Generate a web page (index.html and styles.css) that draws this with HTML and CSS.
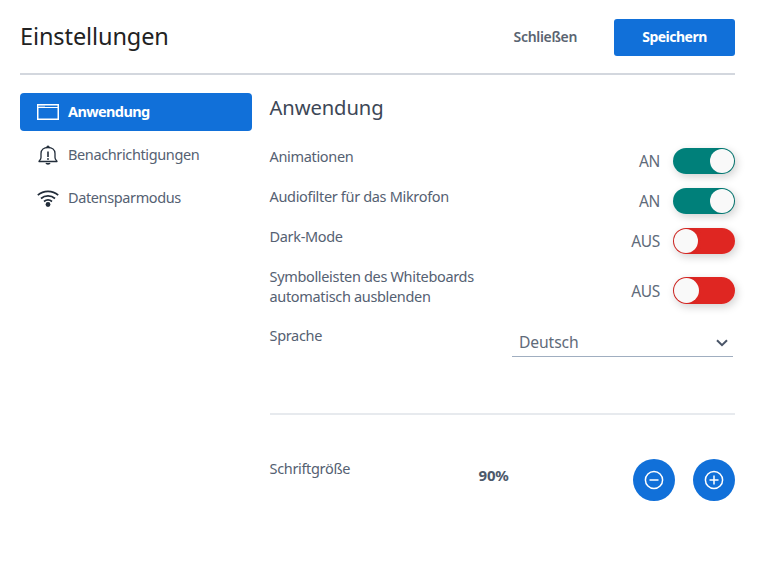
FILE: index.html
```html
<!DOCTYPE html>
<html lang="de">
<head>
<meta charset="utf-8">
<title>Einstellungen</title>
<link rel="stylesheet" href="styles.css">
</head>
<body>
<div class="modal">
  <header class="head">
    <h1 class="head-title">Einstellungen</h1>
    <div class="head-actions">
      <button class="btn-close">Schließen</button>
      <button class="btn-save">Speichern</button>
    </div>
  </header>
  <div class="main">
    <nav class="side">
      <div class="side-item active">
        <svg class="side-icon" viewBox="0 0 22 18" width="22" height="18" fill="none" stroke="currentColor"><rect x="0.75" y="1.75" width="20.5" height="14.5" stroke-width="1.5"/><path d="M1 4.5h20" stroke-width="1"/><path d="M2.5 3.2h1M4.5 3.2h1M6.5 3.2h1" stroke-width="1"/></svg>
        <span>Anwendung</span>
      </div>
      <div class="side-item">
        <svg class="side-icon" viewBox="0 0 22 22" width="22" height="22" fill="none" stroke="currentColor" stroke-width="1.3"><path d="M2 17.5c0-1 2-1.500 2-4V9.500C4 5.800 7 3.500 11 3.500s7 2.300 7 6v4c0 2.500 2 3 2 4z" stroke-linejoin="round"/><path d="M10 3.200a1 1 0 0 1 2 0" /><path d="M9 19c.5 1.300 3.500 1.300 4 0" fill="currentColor"/><path d="M11 7.500v5.500" stroke-width="1.600"/><circle cx="11" cy="15" r=".9" fill="currentColor" stroke="none"/></svg>
        <span>Benachrichtigungen</span>
      </div>
      <div class="side-item">
        <svg class="side-icon" viewBox="0 0 22 18" width="22" height="18" fill="none" stroke="currentColor" stroke-width="1.700"><path d="M.8 6.200C6.500 1 15.500 1 21.200 6.200"/><path d="M4 9.500c4-3.600 10-3.600 14 0"/><path d="M7 12.500c2.400-2 5.600-2 8 0"/><circle cx="11" cy="15.500" r="2.400" fill="currentColor" stroke="none"/></svg>
        <span>Datensparmodus</span>
      </div>
    </nav>
    <section class="content">
      <h2 class="content-title">Anwendung</h2>
      <div class="set-row row-a">
        <div class="set-label">Animationen</div>
        <div class="set-ctl"><span class="state">AN</span><span class="toggle on"><i class="knob"></i></span></div>
      </div>
      <div class="set-row row-b">
        <div class="set-label">Audiofilter für das Mikrofon</div>
        <div class="set-ctl"><span class="state">AN</span><span class="toggle on"><i class="knob"></i></span></div>
      </div>
      <div class="set-row row-b">
        <div class="set-label">Dark-Mode</div>
        <div class="set-ctl"><span class="state">AUS</span><span class="toggle off"><i class="knob"></i></span></div>
      </div>
      <div class="set-row row-c">
        <div class="set-label">Symbolleisten des Whiteboards<br>automatisch ausblenden</div>
        <div class="set-ctl"><span class="state state-low">AUS</span><span class="toggle off tall"><i class="knob"></i></span></div>
      </div>
      <div class="set-row row-lang">
        <div class="set-label">Sprache</div>
        <div class="select"><span class="select-value">Deutsch</span>
          <svg viewBox="0 0 12 8" width="12" height="8" fill="none" stroke="#4a5568" stroke-width="2"><path d="M1 1.200l5 5 5-5"/></svg>
        </div>
      </div>
      <hr class="sep">
      <div class="font-row">
        <div class="set-label">Schriftgröße</div>
        <div class="font-val">90%</div>
        <div class="font-btns">
          <button class="round"><svg viewBox="0 0 20 20" width="20" height="20" fill="none" stroke="#fff" stroke-width="1.500"><circle cx="10" cy="10" r="8.600"/><path d="M5.500 10h9"/></svg></button>
          <button class="round"><svg viewBox="0 0 20 20" width="20" height="20" fill="none" stroke="#fff" stroke-width="1.500"><circle cx="10" cy="10" r="8.600"/><path d="M5.500 10h9M10 5.500v9"/></svg></button>
        </div>
      </div>
    </section>
  </div>
</div>
</body>
</html>
```
FILE: styles.css
```css
* { box-sizing: border-box; }
html, body { margin: 0; background: #fff; }
body { font-family: "Noto Sans", "Open Sans", sans-serif; color: #4e5a6b; width: 777px; height: 563px; overflow: hidden; }
button { font-family: inherit; border: 0; cursor: pointer; }
.modal { padding: 19px 42px 0 20px; }
.head { display: flex; justify-content: space-between; align-items: center; box-sizing: content-box; height: 37px; padding-bottom: 17px; border-bottom: 2px solid #d3d7de; }
.head-title { margin: 0 0 4px; font-size: 23.5px; font-weight: 400; color: #222; letter-spacing: -0.1px; }
.head-actions { display: flex; align-items: center; gap: 37px; }
.btn-close { background: none; padding: 0 0 2px; font-size: 14px; font-weight: 600; color: #5a6471; letter-spacing: -0.33px; }
.btn-save { width: 121px; height: 37px; padding: 0 0 2px; background: #1170d9; color: #fff; border-radius: 3px; font-size: 14px; font-weight: 700; letter-spacing: -0.5px; }
.main { display: flex; gap: 18px; padding-top: 18px; }
.side { width: 232px; flex: none; display: flex; flex-direction: column; gap: 5px; }
.side-item { height: 38px; display: flex; align-items: center; gap: 9px; padding-left: 17px; border-radius: 4px; font-size: 14.5px; color: #556172; letter-spacing: -0.38px; }
.side-item span { padding-bottom: 2px; }
.side-icon { color: #222d3a; flex: none; }
.side-item.active { background: #1170d9; color: #fff; font-weight: 700; letter-spacing: -0.62px; }
.side-item.active .side-icon { color: #fff; }
.content { flex: 1; min-width: 0; }
.content-title { margin: 0 0 0 -0.5px; font-size: 20.2px; font-weight: 400; line-height: 30px; height: 30px; color: #3d4756; letter-spacing: -0.1px; position: relative; top: -1px; }
.set-row { display: flex; justify-content: space-between; }
.set-label { margin: -2px 0 0 -0.5px; font-size: 14.5px; line-height: 20px; color: #556172; letter-spacing: -0.33px; }
.set-ctl { display: flex; align-items: center; gap: 13px; }
.state { font-size: 15.5px; color: #5f6b7a; letter-spacing: -0.3px; }
.state-low { padding-top: 2px; }
.row-a { margin-top: 25px; }
.row-b { margin-top: 14px; }
.row-c { margin-top: 14px; }
.row-c .set-ctl { height: 44px; }
.row-lang { margin-top: 15px; }
.toggle { position: relative; display: block; width: 62px; height: 26px; border-radius: 13px; box-shadow: 2px 3px 8px rgba(0,0,0,.18); }
.toggle.tall { height: 27px; border-radius: 14px; }
.toggle.on { background: linear-gradient(90deg, #00807a 60%, #006e68); }
.toggle.off { background: linear-gradient(90deg, #c92420, #df2622 45%); }
.knob { position: absolute; top: 1px; width: 24px; height: 24px; border-radius: 50%; background: #f9f9f9; }
.tall .knob { height: 25px; width: 25px; }
.on .knob { right: 1px; }
.off .knob { left: 1px; }
.select { width: 221px; height: 27px; margin: 3px 2px 0 0; padding: 0 5px 0 7px; display: flex; align-items: center; justify-content: space-between; border-bottom: 1px solid #a0aec0; font-size: 15.7px; color: #5f6b7a; letter-spacing: -0.13px; }
.select-value { padding-bottom: 2px; }
.sep { margin: 56px 0 0; height: 2px; border: 0; background: #e7eaee; }
.font-row { display: flex; margin-top: 44px; align-items: flex-start; }
.font-row .set-label { width: 209px; margin-top: -1px; }
.font-val { font-size: 15px; font-weight: 700; color: #4e5a6b; margin-top: 6px; letter-spacing: -0.2px; }
.font-btns { margin-left: auto; display: flex; gap: 17.5px; }
.round { width: 42.25px; height: 42px; padding: 0; border-radius: 50%; background: #1170d9; display: flex; align-items: center; justify-content: center; }
```
